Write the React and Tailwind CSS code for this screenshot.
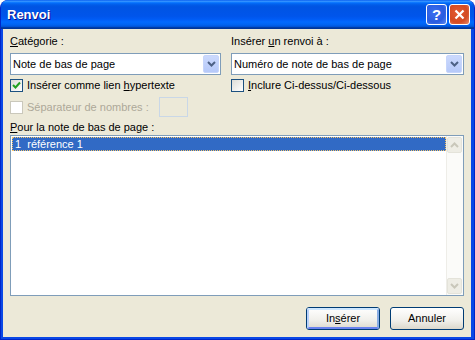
function Check({ checked, disabled }) {
  return (
    <div
      className={
        disabled
          ? "w-[13px] h-[13px] shrink-0 border border-[#CAC8BB] bg-white"
          : "w-[13px] h-[13px] shrink-0 border border-[#1C5180] bg-[linear-gradient(135deg,#dcdcd7,#ffffff)] flex items-center justify-center"
      }
    >
      {checked && (
        <svg width="9" height="9" viewBox="0 0 9 9">
          <path d="M1 4 L3.5 6.5 L8 1.5" stroke="#21A121" strokeWidth="2" fill="none" />
        </svg>
      )}
    </div>
  );
}

function Chevron({ color = "#4D6185" }) {
  return (
    <svg width="9" height="6" viewBox="0 0 9 6">
      <path d="M1 1 L4.5 4.5 L8 1" stroke={color} strokeWidth="2" fill="none" />
    </svg>
  );
}

function Combo({ text }) {
  return (
    <div className="h-[22px] border border-[#7F9DB9] bg-white flex items-center">
      <span className="pl-[2px] flex-1">{text}</span>
      <div className="w-[16px] h-[18px] mr-[1px] rounded-[2px] bg-[linear-gradient(180deg,#cbd9fd,#b6c9f9)] border border-[#c6d5fb] flex items-center justify-center">
        <Chevron />
      </div>
    </div>
  );
}

function Btn({ children, def }) {
  return (
    <div className="w-[74px] h-[23px] rounded-[3px] border border-[#003C74] bg-[linear-gradient(180deg,#ffffff,#f0efea_60%,#dcd8cc)] flex items-center justify-center">
      {def ? (
        <div className="w-full h-full rounded-[2px] border-2 border-t-[#CEE7FF] border-l-[#B9D1FA] border-r-[#89ADE4] border-b-[#6982EE] flex items-center justify-center">
          {children}
        </div>
      ) : (
        children
      )}
    </div>
  );
}

export default function App() {
  return (
    <div className="w-[475px] h-[340px] bg-white text-black font-['Liberation_Sans',Arial,sans-serif] text-[11px] leading-[13px]">
      <div className="w-[475px] h-[340px] flex flex-col rounded-t-[8px] overflow-hidden bg-[#0A48E6] border-l border-r border-b border-[#0026C9]">
        <div className="h-[29px] shrink-0 flex items-center pl-[6px] pr-[4px] bg-[linear-gradient(180deg,#0058ee_0%,#3a93ff_4%,#288eff_6%,#127dff_8%,#036ffc_10%,#0262ee_14%,#0057e5_20%,#0054e3_24%,#0055eb_56%,#005bf5_66%,#026afe_76%,#0062ef_86%,#0052d6_92%,#0040ab_94%,#003092_100%)]">
          <span className="text-white font-bold text-[13px] [text-shadow:1px_1px_#0f1089]">Renvoi</span>
          <div className="ml-auto flex gap-[2px]">
            <div className="w-[21px] h-[21px] rounded-[3px] border border-white bg-[radial-gradient(circle_at_40%_40%,#3b6ff0,#2a5ce0_60%,#5d8af0)] flex items-center justify-center text-white font-bold text-[15px] leading-none">
              ?
            </div>
            <div className="w-[21px] h-[21px] rounded-[3px] border border-white bg-[radial-gradient(circle_at_40%_40%,#e45b32,#d34a22_60%,#e98a6a)] flex items-center justify-center">
              <svg width="11" height="11" viewBox="0 0 11 11">
                <path d="M1.5 1.5 L9.5 9.5 M9.5 1.5 L1.5 9.5" stroke="white" strokeWidth="2.2" />
              </svg>
            </div>
          </div>
        </div>
        <div className="flex-1 ml-[2px] mr-[3px] mb-[2px] bg-[#ECE9D8] px-[7px] pt-[6px] pb-[7px] flex flex-col">
          <div className="grid grid-cols-[211px_233px] gap-x-[10px]">
            <div className="flex flex-col">
              <div className="mb-[5px]">
                <span className="underline">C</span>atégorie :
              </div>
              <Combo text="Note de bas de page" />
              <div className="mt-[4px] flex items-center gap-[4px] h-[13px]">
                <Check checked />
                <span>
                  Insérer comme lien <span className="underline">h</span>ypertexte
                </span>
              </div>
              <div className="mt-[5px] flex items-center h-[20px]">
                <Check disabled />
                <span className="ml-[4px] text-[#ACA899]">Séparateur de nombres :</span>
                <div className="ml-[10px] w-[29px] h-[20px] border border-[#C9D7E7] bg-[#ECE9D8]"></div>
              </div>
            </div>
            <div className="flex flex-col">
              <div className="mb-[5px]">
                Insérer <span className="underline">u</span>n renvoi à :
              </div>
              <Combo text="Numéro de note de bas de page" />
              <div className="mt-[4px] flex items-center gap-[4px] h-[13px]">
                <Check />
                <span>
                  <span className="underline">I</span>nclure Ci-dessus/Ci-dessous
                </span>
              </div>
            </div>
          </div>
          <div className="mt-[4px]">
            <span className="underline">P</span>our la note de bas de page :
          </div>
          <div className="mt-[1px] h-[161px] border border-[#7F9DB9] bg-white flex">
            <div className="flex-1 pt-[1px] pl-[1px]">
              <div className="h-[14px] bg-[#316AC5] text-white pl-[2px] flex items-center border border-dotted border-[#F2C36A]">
                1&nbsp;&nbsp;référence 1
              </div>
            </div>
            <div className="w-[17px] bg-[#FBFBF9] border-l border-[#EEEDE8] flex flex-col justify-between py-[1px] pr-[1px]">
              <div className="h-[16px] rounded-[2px] border border-[#E4E3DA] bg-[#EEEDE5] flex items-center justify-center rotate-180">
                <Chevron color="#C9C7BA" />
              </div>
              <div className="h-[16px] rounded-[2px] border border-[#E4E3DA] bg-[#EEEDE5] flex items-center justify-center">
                <Chevron color="#C9C7BA" />
              </div>
            </div>
          </div>
          <div className="mt-auto flex justify-end gap-[10px]">
            <Btn def>
              <span>
                In<span className="underline">s</span>érer
              </span>
            </Btn>
            <Btn>Annuler</Btn>
          </div>
        </div>
      </div>
    </div>
  );
}
